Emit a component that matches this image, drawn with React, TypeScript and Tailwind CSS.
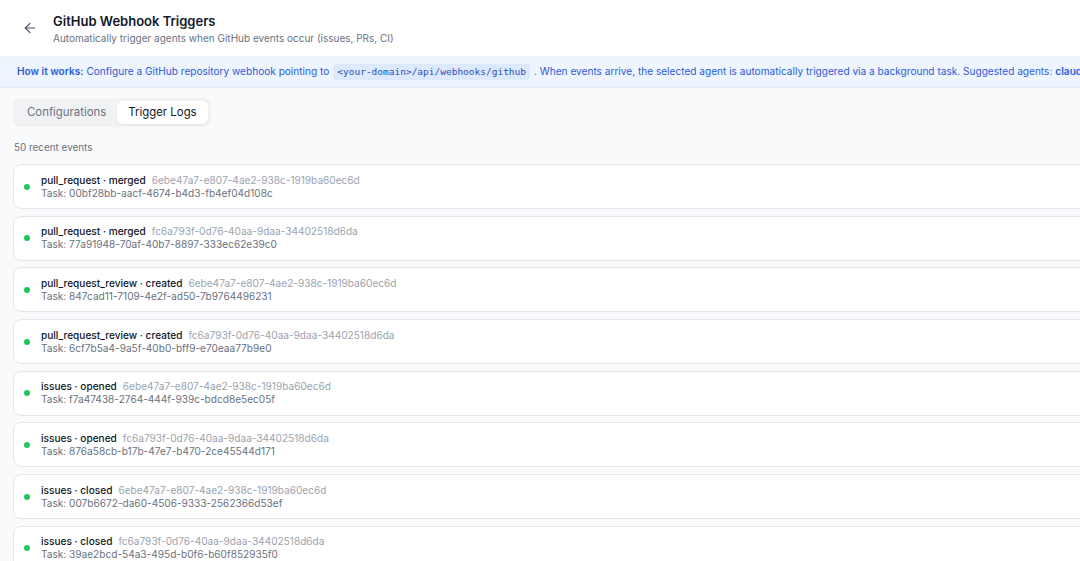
import React from "react";

type LogEntry = { event: string; id: string; task: string };

const logs: LogEntry[] = [
  { event: "pull_request · merged", id: "6ebe47a7-e807-4ae2-938c-1919ba60ec6d", task: "00bf28bb-aacf-4674-b4d3-fb4ef04d108c" },
  { event: "pull_request · merged", id: "fc6a793f-0d76-40aa-9daa-34402518d6da", task: "77a91948-70af-40b7-8897-333ec62e39c0" },
  { event: "pull_request_review · created", id: "6ebe47a7-e807-4ae2-938c-1919ba60ec6d", task: "847cad11-7109-4e2f-ad50-7b9764496231" },
  { event: "pull_request_review · created", id: "fc6a793f-0d76-40aa-9daa-34402518d6da", task: "6cf7b5a4-9a5f-40b0-bff9-e70eaa77b9e0" },
  { event: "issues · opened", id: "6ebe47a7-e807-4ae2-938c-1919ba60ec6d", task: "f7a47438-2764-444f-939c-bdcd8e5ec05f" },
  { event: "issues · opened", id: "fc6a793f-0d76-40aa-9daa-34402518d6da", task: "876a58cb-b17b-47e7-b470-2ce45544d171" },
  { event: "issues · closed", id: "6ebe47a7-e807-4ae2-938c-1919ba60ec6d", task: "007b6672-da60-4506-9333-2562366d53ef" },
  { event: "issues · closed", id: "fc6a793f-0d76-40aa-9daa-34402518d6da", task: "39ae2bcd-54a3-495d-b0f6-b60f852935f0" },
];

function BackArrow() {
  return (
    <svg width="16" height="16" viewBox="0 0 24 24" fill="none" stroke="#4b5563" strokeWidth="1.8" strokeLinecap="round" strokeLinejoin="round">
      <path d="M19 12H5" />
      <path d="M12 19l-7-7 7-7" />
    </svg>
  );
}

function LogCard({ entry }: { entry: LogEntry }) {
  return (
    <div className="h-[45px] shrink-0 bg-white border border-[#e5e7eb] rounded-lg grid grid-cols-[6px_1fr] gap-x-[11px] items-center pl-[10px]">
      <div className="w-[6px] h-[6px] rounded-full bg-[#22c55e]" />
      <div className="flex flex-col items-start text-[10.1px] leading-[13px] whitespace-nowrap">
        <div>
          <span className="font-medium text-[#111827]">{entry.event}</span>
          <span className="ml-[6px] text-[#9ca3af]">{entry.id}</span>
        </div>
        <div className="text-[#6b7280]">Task: {entry.task}</div>
      </div>
    </div>
  );
}

export default function App() {
  return (
    <div className="w-[1080px] h-[561px] overflow-hidden bg-[#f9fafb] font-['Inter','Noto_Sans',sans-serif] text-[#111827]">
      <div className="w-[1240px]">
        {/* header */}
        <header className="h-[57px] bg-white border-b border-[#eef0f3] flex items-center pl-[22px]">
          <BackArrow />
          <div className="ml-[15px] pt-[2px] flex flex-col">
            <h1 className="text-[13px] leading-[17px] font-semibold text-[#111827]">GitHub Webhook Triggers</h1>
            <p className="text-[10px] leading-[14px] text-[#6b7280] mt-[1px]">
              Automatically trigger agents when GitHub events occur (issues, PRs, CI)
            </p>
          </div>
        </header>

        {/* info banner */}
        <div className="h-[31px] bg-[#eef5ff] border-b border-[#e3ecfb] flex items-center pl-[17px] whitespace-nowrap text-[10.1px] text-[#2f5bd6]">
          <span className="font-semibold">How it works:</span>
          <span className="ml-[3px]">Configure a GitHub repository webhook pointing to</span>
          <code className="mx-[4px] px-[4px] py-[1px] rounded bg-[#dde9fc] font-['DejaVu_Sans_Mono',monospace] text-[9.5px] text-[#2a4fb8]">
            &lt;your-domain&gt;/api/webhooks/github
          </code>
          <span>. When events arrive, the selected agent is automatically triggered via a background task. Suggested agents:</span>
          <span className="ml-[3px] font-semibold">claude-code</span>
        </div>

        <div className="px-[13px]">
          {/* tabs */}
          <div className="mt-[10px] inline-flex items-center h-[29px] p-[3px] rounded-lg bg-[#f1f2f4]">
            <button className="h-full px-[11px] text-[11.4px] text-[#6b7280] rounded-md">Configurations</button>
            <button className="h-full px-[11px] text-[11.4px] text-[#111827] bg-white rounded-md shadow-[0_1px_2px_rgba(0,0,0,0.06)]">
              Trigger Logs
            </button>
          </div>

          <p className="mt-[13px] text-[9.9px] leading-[14px] text-[#6b7280] pl-[1px]">50 recent events</p>

          {/* logs */}
          <div className="mt-[10px] flex flex-col gap-[6.7px]">
            {logs.map((l, i) => (
              <LogCard key={i} entry={l} />
            ))}
          </div>
        </div>
      </div>
    </div>
  );
}
